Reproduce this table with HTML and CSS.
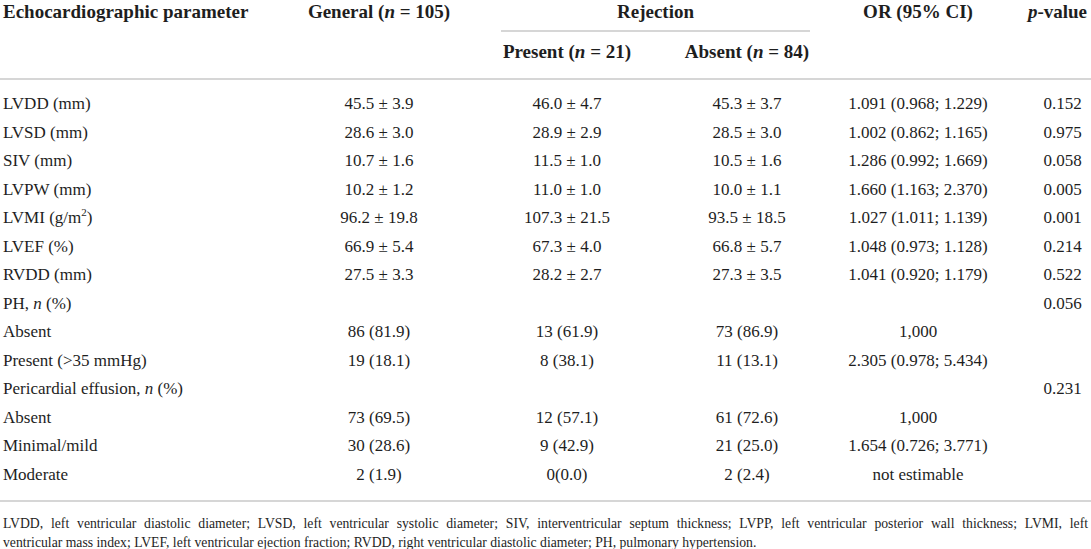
FILE: index.html
```html
<!DOCTYPE html>
<html lang="en">
<head>
  <meta charset="UTF-8" />
  <meta name="viewport" content="width=device-width, initial-scale=1.0"/>
  <title>Echocardiographic parameters</title>
  <link rel="stylesheet" href="styles.css">
</head>
<body>

  <!-- Table -->
  <table class="echo">
    <colgroup>
      <col class="c-param">
      <col class="c-general">
      <col class="c-present">
      <col class="c-absent">
      <col class="c-or">
      <col class="c-p">
    </colgroup>
    <thead>
      <tr class="head-top">
        <th class="param" rowspan="2">Echocardiographic parameter</th>
        <th rowspan="2">General (<i>n</i> = 105)</th>
        <th colspan="2"><div class="group">Rejection</div></th>
        <th rowspan="2">OR (95% CI)</th>
        <th rowspan="2" class="pval-head"><i>p</i>-value</th>
      </tr>
      <tr class="head-sub">
        <th>Present (<i>n</i> = 21)</th>
        <th>Absent (<i>n</i> = 84)</th>
      </tr>
    </thead>
    <tbody>
      <tr><td class="param">LVDD (mm)</td><td>45.5 ± 3.9</td><td>46.0 ± 4.7</td><td>45.3 ± 3.7</td><td>1.091 (0.968; 1.229)</td><td class="pval">0.152</td></tr>
      <tr><td class="param">LVSD (mm)</td><td>28.6 ± 3.0</td><td>28.9 ± 2.9</td><td>28.5 ± 3.0</td><td>1.002 (0.862; 1.165)</td><td class="pval">0.975</td></tr>
      <tr><td class="param">SIV (mm)</td><td>10.7 ± 1.6</td><td>11.5 ± 1.0</td><td>10.5 ± 1.6</td><td>1.286 (0.992; 1.669)</td><td class="pval">0.058</td></tr>
      <tr><td class="param">LVPW (mm)</td><td>10.2 ± 1.2</td><td>11.0 ± 1.0</td><td>10.0 ± 1.1</td><td>1.660 (1.163; 2.370)</td><td class="pval">0.005</td></tr>
      <tr><td class="param">LVMI (g/m<sup>2</sup>)</td><td>96.2 ± 19.8</td><td>107.3 ± 21.5</td><td>93.5 ± 18.5</td><td>1.027 (1.011; 1.139)</td><td class="pval">0.001</td></tr>
      <tr><td class="param">LVEF (%)</td><td>66.9 ± 5.4</td><td>67.3 ± 4.0</td><td>66.8 ± 5.7</td><td>1.048 (0.973; 1.128)</td><td class="pval">0.214</td></tr>
      <tr><td class="param">RVDD (mm)</td><td>27.5 ± 3.3</td><td>28.2 ± 2.7</td><td>27.3 ± 3.5</td><td>1.041 (0.920; 1.179)</td><td class="pval">0.522</td></tr>
      <tr><td class="param">PH, <i>n</i> (%)</td><td></td><td></td><td></td><td></td><td class="pval">0.056</td></tr>
      <tr><td class="param">Absent</td><td>86 (81.9)</td><td>13 (61.9)</td><td>73 (86.9)</td><td>1,000</td><td class="pval"></td></tr>
      <tr><td class="param">Present (&gt;35 mmHg)</td><td>19 (18.1)</td><td>8 (38.1)</td><td>11 (13.1)</td><td>2.305 (0.978; 5.434)</td><td class="pval"></td></tr>
      <tr><td class="param">Pericardial effusion, <i>n</i> (%)</td><td></td><td></td><td></td><td></td><td class="pval">0.231</td></tr>
      <tr><td class="param">Absent</td><td>73 (69.5)</td><td>12 (57.1)</td><td>61 (72.6)</td><td>1,000</td><td class="pval"></td></tr>
      <tr><td class="param">Minimal/mild</td><td>30 (28.6)</td><td>9 (42.9)</td><td>21 (25.0)</td><td>1.654 (0.726; 3.771)</td><td class="pval"></td></tr>
      <tr><td class="param">Moderate</td><td>2 (1.9)</td><td>0(0.0)</td><td>2 (2.4)</td><td>not estimable</td><td class="pval"></td></tr>
    </tbody>
  </table>

  <!-- Footnote -->
  <p class="note"><span class="note-line">LVDD, left ventricular diastolic diameter; LVSD, left ventricular systolic diameter; SIV, interventricular septum thickness; LVPP, left ventricular posterior wall thickness; LVMI, left</span>
  <span>ventricular mass index; LVEF, left ventricular ejection fraction; RVDD, right ventricular diastolic diameter; PH, pulmonary hypertension.</span></p>

</body>
</html>
```

FILE: styles.css
```css
body {
  font-family: "Liberation Serif", "Times New Roman", serif;
  margin: 0;
  background: #fff;
  color: #1e1e1e;
}

.echo {
  width: 1091px;
  border-collapse: collapse;
  table-layout: fixed;
}

.c-param { width: 290px; }
.c-general { width: 178px; }
.c-present { width: 198px; }
.c-absent { width: 162px; }
.c-or { width: 180px; }
.c-p { width: 83px; }

.echo th,
.echo td {
  text-align: center;
  white-space: nowrap;
}

.echo th {
  font-size: 19px;
  font-weight: bold;
  line-height: 20px;
  vertical-align: top;
  padding: 2px 3px 0;
}

.echo .param {
  text-align: left;
}

.echo .pval {
  padding-left: 29px;
}

.echo .pval-head {
  text-align: right;
  padding-right: 4px;
}

/* group header with rule under it */
.group {
  margin: 0 15px 0 30px;
  padding-bottom: 8px;
  border-bottom: 2px solid #d6d6d6;
}

.head-sub th {
  padding: 10px 3px 16px;
}

.echo thead {
  border-bottom: 2px solid #d6d6d6;
}

.echo tbody {
  border-bottom: 2px solid #d6d6d6;
}

.echo td {
  font-size: 17px;
  line-height: 20.5px;
  padding: 4px 3px;
}

.echo tbody tr:first-child td {
  padding-top: 14px;
}

.echo tbody tr:last-child td {
  padding-bottom: 15px;
}

sup {
  font-size: 11px;
  line-height: 0;
}

.note {
  font-size: 13.7px;
  line-height: 19px;
  margin: 12px 3px 0;
}

.note span {
  display: block;
}

.note .note-line {
  text-align: justify;
  text-align-last: justify;
}
```
